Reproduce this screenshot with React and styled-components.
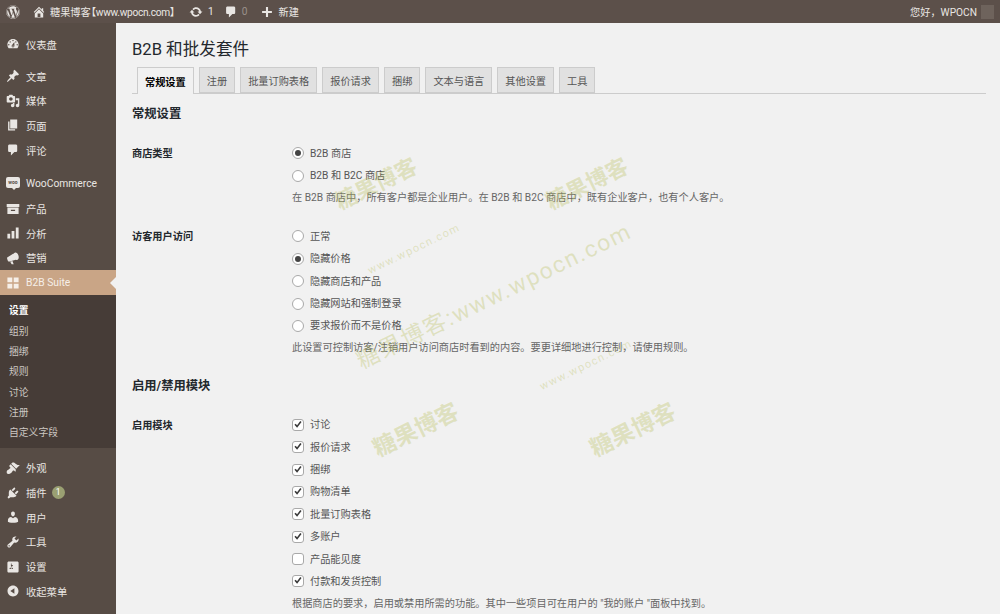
import React from 'react';
import styled, { createGlobalStyle } from 'styled-components';
import { FaWordpress } from 'react-icons/fa';

const GlobalStyle = createGlobalStyle`
  html, body {
    margin: 0;
    height: 100%;
    overflow: hidden;
    background: #f1f1f1;
  }
  body {
    font-family: Roboto, "Noto Sans CJK SC", sans-serif;
    font-size: 10.2px;
    color: #555;
  }
  * {
    box-sizing: border-box;
  }
`;

const ICONS = {
  home: 'M16 8.5l1.53 1.53-1.06 1.06L10 4.62l-6.47 6.47-1.06-1.06L10 2.5l4 4v-2h2v4zm-6-2.46l6 5.99V18H4v-5.97zM12 17v-5H8v5h4z',
  update: 'M10.2 3.28c3.53 0 6.43 2.61 6.92 6h2.08l-3.5 4-3.5-4h2.32c-.45-1.97-2.21-3.45-4.32-3.45-1.45 0-2.73.71-3.54 1.78L4.95 5.66C6.23 4.2 8.11 3.28 10.2 3.28zm-.4 13.44c-3.52 0-6.43-2.61-6.92-6H.8l3.5-4c1.17 1.33 2.33 2.67 3.5 4H5.48c.45 1.97 2.21 3.45 4.32 3.45 1.45 0 2.73-.71 3.54-1.78l1.71 1.95c-1.28 1.46-3.15 2.38-5.25 2.38z',
  comment: 'M5 2h9c1.1 0 2 .9 2 2v7c0 1.1-.9 2-2 2h-2l-5 5v-5H5c-1.1 0-2-.9-2-2V4c0-1.1.9-2 2-2z',
  plus: 'M17 8.5v3h-5.5V17h-3v-5.5H3v-3h5.5V3h3v5.5z',
  dashboard: 'M3.76 16h12.48c1.1-1.37 1.76-3.11 1.76-5 0-4.42-3.58-8-8-8s-8 3.58-8 8c0 1.89.66 3.63 1.76 5zM10 4c.55 0 1 .45 1 1s-.45 1-1 1-1-.45-1-1 .45-1 1-1zM6 6c.55 0 1 .45 1 1s-.45 1-1 1-1-.45-1-1 .45-1 1-1zm8 0c.55 0 1 .45 1 1s-.45 1-1 1-1-.45-1-1 .45-1 1-1zm-5.37 5.55L12 7v6c0 1.1-.9 2-2 2s-2-.9-2-2c0-.57.24-1.08.63-1.45zM4 10c.55 0 1 .45 1 1s-.45 1-1 1-1-.45-1-1 .45-1 1-1zm12 0c.55 0 1 .45 1 1s-.45 1-1 1-1-.45-1-1 .45-1 1-1zm-5 3c0-.55-.45-1-1-1s-1 .45-1 1 .45 1 1 1 1-.45 1-1z',
  post: 'M10.44 3.02l1.82-1.82 6.36 6.35-1.83 1.82c-1.05-.68-2.48-.57-3.41.36l-.75.75c-.92.93-1.04 2.35-.35 3.41l-1.83 1.82-2.41-2.41-2.8 2.79c-.42.42-3.38 2.71-3.8 2.29s1.86-3.39 2.28-3.81l2.79-2.79L4.1 9.36l1.83-1.82c1.05.69 2.48.57 3.4-.36l.75-.75c.93-.92 1.05-2.35.36-3.41z',
  media: 'M13 11V4c0-.55-.45-1-1-1h-1.67L9 1H5L3.67 3H2c-.55 0-1 .45-1 1v7c0 .55.45 1 1 1h10c.55 0 1-.45 1-1zM7 4.5c1.38 0 2.5 1.12 2.5 2.5S8.38 9.5 7 9.5 4.5 8.38 4.5 7 5.62 4.5 7 4.5zM14 6h5v10.5c0 1.38-1.12 2.5-2.5 2.5S14 17.88 14 16.5s1.12-2.5 2.5-2.5c.17 0 .34.02.5.05V9h-3V6zm-4 8.05V13h2v3.5c0 1.38-1.12 2.5-2.5 2.5S7 17.88 7 16.5 8.12 14 9.5 14c.17 0 .34.02.5.05z',
  page: 'M6 15V2h10v13H6zm-1 1h8v2H3V5h2v11z',
  product: 'M1 3h18v4H1V3zm1 5h16v9H2V8zm5 3v2h6v-2H7z',
  analytics: 'M2 11h4v7H2v-7zm6-4h4v11H8V7zm6-5h4v16h-4V2z',
  megaphone: 'M1.7 9.3l9-5.7 3.2 8.9-8.8 2.6c-1.5.4-2.3-.5-2.8-1.9-.5-1.5-1.2-3.3-.6-3.9zM6 15.2l3.2-1 1.8 4.6H8.1zM12.6 2.4c2-.7 4.3 1.2 5.2 4.2s.2 5.7-1.8 6.3-4.2-1.3-5-4.3-.3-5.5 1.6-6.2z',
  grid: 'M2 2h7v7H2V2zm9 0h7v7h-7V2zM2 11h7v7H2v-7zm9 0h7v7h-7v-7z',
  appearance: 'M14.48 11.06L7.41 3.99l1.5-1.5c.5-.56 2.3-.47 3.51.32 1.21.8 1.43 1.28 2.91 2.1 1.18.64 2.45 1.26 4.45.85zm-.71.71L6.7 4.7 4.93 6.47c-.39.39-.39 1.02 0 1.41l1.06 1.06c.39.39.39 1.03 0 1.42-.6.6-1.43 1.11-2.21 1.69-.35.26-.7.53-1.01.84C1.43 13.23.91 14.8 1 16.2c.04.7.15 1.34.47 1.73.4.48 1.07.68 1.77.74 1.4.1 2.97-.42 4.31-1.76.31-.31.58-.66.84-1.01.58-.78 1.09-1.61 1.69-2.21.39-.39 1.03-.39 1.42 0l1.06 1.06c.39.39 1.02.39 1.41 0z',
  plugin: 'M13.11 4.36L9.87 7.6 8 5.73l3.24-3.24c.35-.34 1.05-.2 1.56.32.52.51.66 1.21.31 1.55zm-8 1.77l.91-1.12 9.01 9.01-1.19.84c-.71.71-2.63 1.16-3.82 1.16H6.14L4.9 17.26c-.59.59-1.54.59-2.12 0-.59-.58-.59-1.53 0-2.12l1.24-1.24v-3.88c0-1.13.4-3.19 1.09-3.89zm7.26 3.97l3.24-3.24c.34-.35 1.04-.21 1.55.31.52.51.66 1.21.31 1.55l-3.24 3.25z',
  users: 'M10 9.25c-2.27 0-2.73-3.44-2.73-3.44C7 4.02 7.82 2 9.97 2c2.16 0 2.98 2.02 2.71 3.81 0 0-.41 3.44-2.68 3.44zm0 2.57L12.72 10c2.39 0 4.52 2.33 4.52 4.53v2.49s-3.65 1.13-7.24 1.13c-3.65 0-7.24-1.13-7.24-1.13v-2.49c0-2.25 1.94-4.48 4.47-4.48z',
  tools: 'M16.68 9.77c-1.34 1.34-3.3 1.67-4.95.99l-5.41 6.52c-.99.99-2.59.99-3.58 0s-.99-2.59 0-3.57l6.52-5.42c-.68-1.65-.35-3.61.99-4.95 1.28-1.28 3.12-1.62 4.72-1.06l-2.89 2.89 2.82 2.82 2.86-2.87c.53 1.58.18 3.39-1.08 4.65zM3.81 16.21c.4.39 1.04.39 1.43 0 .4-.4.4-1.04 0-1.43-.39-.4-1.03-.4-1.43 0-.39.39-.39 1.03 0 1.43z',
  settings: 'M18 16V4c0-1.1-.9-2-2-2H4c-1.1 0-2 .9-2 2v12c0 1.1.9 2 2 2h12c1.1 0 2-.9 2-2zM8 11h1c.55 0 1 .45 1 1s-.45 1-1 1H8v1.5c0 .28-.22.5-.5.5s-.5-.22-.5-.5V13H6c-.55 0-1-.45-1-1s.45-1 1-1h1V5.5c0-.28.22-.5.5-.5s.5.22.5.5V7h1c.55 0 1 .45 1 1s-.45 1-1 1h-1v5.5c0 .28-.22.5-.5.5s-.5-.22-.5-.5V9z',
  collapse: 'M10 2.16c4.33 0 7.84 3.51 7.84 7.84s-3.51 7.84-7.84 7.84S2.16 14.33 2.16 10 5.71 2.16 10 2.16zm2 11.72V6.12L6.18 9.97z',
};

const Svg = styled.svg`
  display: block;
  flex: none;
  fill: currentColor;
`;

const Icon = ({ name, size = 14 }) => (
  <Svg viewBox="0 0 20 20" width={size} height={size}>
    <path d={ICONS[name]} />
  </Svg>
);

const AdminBar = styled.header`
  height: 23px;
  background: #5c504a;
  color: #e9e6e3;
  display: flex;
  align-items: center;
  padding: 0 6px;
`;

const BarItem = styled.div`
  display: flex;
  align-items: center;
  gap: ${(p) => p.$gap || 5}px;
  margin-left: ${(p) => p.$left || 0}px;
`;

const BarCount = styled.span`
  color: ${(p) => (p.$dim ? '#9a918b' : '#e9e6e3')};
`;

const Bracket = styled.span`
  font-feature-settings: "palt";
`;

const SiteUrl = styled.span`
  letter-spacing: -0.3px;
`;

const Greeting = styled.div`
  margin-left: auto;
  display: flex;
  align-items: center;
  gap: 4px;
`;

const Avatar = styled.span`
  width: 13px;
  height: 14px;
  background: #6e635c;
`;

const Shell = styled.div`
  display: flex;
  height: 591px;
`;

const Sidebar = styled.nav`
  width: 116px;
  flex: none;
  background: #574c45;
  color: #e9e6e3;
  padding-top: 8.7px;
  font-size: 10.3px;
`;

const MenuGroup = styled.div`
  margin-bottom: ${(p) => p.$gap || 0}px;
`;

const MenuItem = styled.div`
  position: relative;
  height: 24.7px;
  display: flex;
  align-items: center;
  gap: 6px;
  padding-left: 6px;
  background: ${(p) => (p.$active ? '#c9a586' : 'transparent')};
  color: ${(p) => (p.$active ? '#f6efe8' : '#e9e6e3')};

  ${(p) =>
    p.$active &&
    `&::after {
      content: '';
      position: absolute;
      right: 0;
      top: 50%;
      margin-top: -6px;
      border: 6px solid transparent;
      border-right-color: #f1f1f1;
      border-left-width: 0;
    }`}
`;

const SubMenu = styled.div`
  background: #463c37;
  padding: 5px 0;
  margin-bottom: 7.8px;
`;

const SubItem = styled.div`
  height: 20.4px;
  display: flex;
  align-items: center;
  padding-left: 9px;
  font-size: 9.8px;
  color: ${(p) => (p.$current ? '#ffffff' : '#cdc8c3')};
  font-weight: ${(p) => (p.$current ? 700 : 400)};
`;

const WooMark = styled.span`
  position: relative;
  width: 14px;
  height: 11px;
  margin-bottom: 2px;
  flex: none;
  border-radius: 2px;
  background: #e9e6e3;
  color: #574c45;
  font-size: 5px;
  line-height: 11px;
  text-align: center;
  font-weight: 700;

  &::after {
    content: '';
    position: absolute;
    left: 6px;
    top: 100%;
    border: 2px solid transparent;
    border-top-color: #e9e6e3;
    border-bottom-width: 0;
  }
`;

const Badge = styled.span`
  width: 13px;
  height: 13px;
  border-radius: 50%;
  background: #9aa072;
  color: #fff;
  font-size: 8.5px;
  line-height: 13px;
  text-align: center;
  margin-left: -1px;
`;

const Main = styled.main`
  position: relative;
  flex: 1;
  padding: 16px 14px 0 16px;
  overflow: hidden;
`;

const Title = styled.h1`
  margin: 0;
  font-size: 16.6px;
  line-height: 22px;
  font-weight: 400;
  color: #23282d;
`;

const Tabs = styled.div`
  display: flex;
  gap: 5px;
  margin-top: 6px;
  padding-left: 5px;
  height: 27px;
  border-bottom: 1px solid #ccc;
`;

const Tab = styled.div`
  height: ${(p) => (p.$active ? 27 : 26)}px;
  padding: 0 7px;
  display: flex;
  align-items: center;
  border: 1px solid #ccc;
  border-bottom: ${(p) => (p.$active ? '0' : '1px solid #ccc')};
  background: ${(p) => (p.$active ? '#f1f1f1' : '#e1e1e1')};
  color: ${(p) => (p.$active ? '#000' : '#555')};
  font-weight: ${(p) => (p.$active ? 700 : 400)};
`;

const SectionTitle = styled.h2`
  margin: ${(p) => p.$top}px 0 0;
  font-size: 12.3px;
  line-height: 20px;
  font-weight: 700;
  color: #23282d;
`;

const FormRow = styled.section`
  display: grid;
  grid-template-columns: 160px 1fr;
  margin-top: ${(p) => p.$top}px;
`;

const RowLabel = styled.div`
  padding-top: 1px;
  line-height: 22.4px;
  font-weight: 700;
  color: #23282d;
`;

const Option = styled.div`
  height: 22.4px;
  display: flex;
  align-items: center;
  gap: 6px;
`;

const OptionText = styled.span`
  margin-bottom: 2px;
`;

const Radio = styled.span`
  width: 12px;
  height: 12px;
  flex: none;
  border-radius: 50%;
  border: 1px solid #a9a9a9;
  background: #fff;
  display: flex;
  align-items: center;
  justify-content: center;

  &::before {
    content: '';
    width: 6px;
    height: 6px;
    border-radius: 50%;
    background: ${(p) => (p.$on ? '#444' : 'transparent')};
  }
`;

const Checkbox = styled.span`
  width: 12px;
  height: 12px;
  flex: none;
  border-radius: 3px;
  border: 1px solid #a9a9a9;
  background: #fff;
  color: #3a3a3a;
`;

const Description = styled.p`
  margin: 0;
  line-height: 22.4px;
  color: #666;
  white-space: nowrap;
`;

const Watermark = styled.span`
  position: absolute;
  left: ${(p) => p.$x - 116}px;
  top: ${(p) => p.$y - 23}px;
  transform: translate(-50%, -50%) rotate(-26deg);
  font-size: ${(p) => p.$size}px;
  font-weight: ${(p) => p.$weight || 700};
  letter-spacing: ${(p) => p.$spacing || 0}px;
  color: rgba(186, 192, 96, 0.34);
  white-space: nowrap;
  pointer-events: none;
`;

const CheckedBox = () => (
  <Checkbox>
    <Svg viewBox="0 0 11 11" width={10} height={10}>
      <path d="M1.6 5.2l1.3-1.2 1.6 1.7L8 1.2 9.4 2.3 4.5 8.6z" />
    </Svg>
  </Checkbox>
);

const topMenus = [
  [{ icon: 'dashboard', label: '仪表盘' }],
  [
    { icon: 'post', label: '文章' },
    { icon: 'media', label: '媒体' },
    { icon: 'page', label: '页面' },
    { icon: 'comment', label: '评论' },
  ],
];

const bottomMenu = [
  { icon: 'appearance', label: '外观' },
  { icon: 'plugin', label: '插件', badge: '1' },
  { icon: 'users', label: '用户' },
  { icon: 'tools', label: '工具' },
  { icon: 'settings', label: '设置' },
  { icon: 'collapse', label: '收起菜单' },
];

const subMenu = ['设置', '组别', '捆绑', '规则', '讨论', '注册', '自定义字段'];

const tabs = ['常规设置', '注册', '批量订购表格', '报价请求', '捆绑', '文本与语言', '其他设置', '工具'];

const visitorOptions = ['正常', '隐藏价格', '隐藏商店和产品', '隐藏网站和强制登录', '要求报价而不是价格'];

const modules = [
  ['讨论', true],
  ['报价请求', true],
  ['捆绑', true],
  ['购物清单', true],
  ['批量订购表格', true],
  ['多账户', true],
  ['产品能见度', false],
  ['付款和发货控制', true],
];

const watermarks = [
  { x: 375, y: 182, size: 22, text: '糖果博客' },
  { x: 586, y: 182, size: 22, text: '糖果博客' },
  { x: 415, y: 428, size: 23, text: '糖果博客' },
  { x: 632, y: 428, size: 23, text: '糖果博客' },
  { x: 414, y: 249, size: 11, weight: 400, spacing: 1.3, text: 'www.wpocn.com' },
  { x: 586, y: 365, size: 11, weight: 400, spacing: 1.3, text: 'www.wpocn.com' },
  { x: 493, y: 294, size: 23, weight: 400, spacing: 1.6, text: '糖果博客:www.wpocn.com' },
];

function App() {
  return (
    <div>
      <GlobalStyle />
      <AdminBar>
        <FaWordpress size={14} />
        <BarItem $left={12} $gap={4}>
          <Icon name="home" />
          <span>
            糖果博客<Bracket>【</Bracket>
            <SiteUrl>www.wpocn.com</SiteUrl>
            <Bracket>】</Bracket>
          </span>
        </BarItem>
        <BarItem $left={14}>
          <Icon name="update" />
          <BarCount>1</BarCount>
        </BarItem>
        <BarItem $left={10} $gap={4}>
          <Icon name="comment" />
          <BarCount $dim>0</BarCount>
        </BarItem>
        <BarItem $left={13} $gap={4}>
          <Icon name="plus" />
          新建
        </BarItem>
        <Greeting>
          您好，WPOCN
          <Avatar />
        </Greeting>
      </AdminBar>
      <Shell>
        <Sidebar>
          {topMenus.map((group, i) => (
            <MenuGroup key={i} $gap={i === 0 ? 7.3 : 9.1}>
              {group.map((item) => (
                <MenuItem key={item.label}>
                  <Icon name={item.icon} />
                  {item.label}
                </MenuItem>
              ))}
            </MenuGroup>
          ))}
          <MenuGroup>
            <MenuItem>
              <WooMark>woo</WooMark>
              WooCommerce
            </MenuItem>
            <MenuItem>
              <Icon name="product" />
              产品
            </MenuItem>
            <MenuItem>
              <Icon name="analytics" />
              分析
            </MenuItem>
            <MenuItem>
              <Icon name="megaphone" />
              营销
            </MenuItem>
            <MenuItem $active>
              <Icon name="grid" />
              B2B Suite
            </MenuItem>
          </MenuGroup>
          <SubMenu>
            {subMenu.map((label, i) => (
              <SubItem key={label} $current={i === 0}>
                {label}
              </SubItem>
            ))}
          </SubMenu>
          <MenuGroup>
            {bottomMenu.map((item) => (
              <MenuItem key={item.label}>
                <Icon name={item.icon} />
                {item.label}
                {item.badge && <Badge>{item.badge}</Badge>}
              </MenuItem>
            ))}
          </MenuGroup>
        </Sidebar>
        <Main>
          <Title>B2B 和批发套件</Title>
          <Tabs>
            {tabs.map((tab, i) => (
              <Tab key={tab} $active={i === 0}>
                {tab}
              </Tab>
            ))}
          </Tabs>
          <SectionTitle $top={10}>常规设置</SectionTitle>
          <FormRow $top={18}>
            <RowLabel>商店类型</RowLabel>
            <div>
              <Option>
                <Radio $on />
                <OptionText>B2B 商店</OptionText>
              </Option>
              <Option>
                <Radio />
                <OptionText>B2B 和 B2C 商店</OptionText>
              </Option>
              <Description>在 B2B 商店中，所有客户都是企业用户。在 B2B 和 B2C 商店中，既有企业客户，也有个人客户。</Description>
            </div>
          </FormRow>
          <FormRow $top={16}>
            <RowLabel>访客用户访问</RowLabel>
            <div>
              {visitorOptions.map((label, i) => (
                <Option key={label}>
                  <Radio $on={i === 1} />
                  <OptionText>{label}</OptionText>
                </Option>
              ))}
              <Description>此设置可控制访客/注销用户访问商店时看到的内容。要更详细地进行控制，请使用规则。</Description>
            </div>
          </FormRow>
          <SectionTitle $top={16}>启用/禁用模块</SectionTitle>
          <FormRow $top={18}>
            <RowLabel>启用模块</RowLabel>
            <div>
              {modules.map(([label, on]) => (
                <Option key={label}>
                  {on ? <CheckedBox /> : <Checkbox />}
                  <OptionText>{label}</OptionText>
                </Option>
              ))}
              <Description>根据商店的要求，启用或禁用所需的功能。其中一些项目可在用户的 "我的账户 "面板中找到。</Description>
            </div>
          </FormRow>
          {watermarks.map((mark) => (
            <Watermark key={`${mark.x}-${mark.y}`} $x={mark.x} $y={mark.y} $size={mark.size} $weight={mark.weight} $spacing={mark.spacing}>
              {mark.text}
            </Watermark>
          ))}
        </Main>
      </Shell>
    </div>
  );
}

export default App;
